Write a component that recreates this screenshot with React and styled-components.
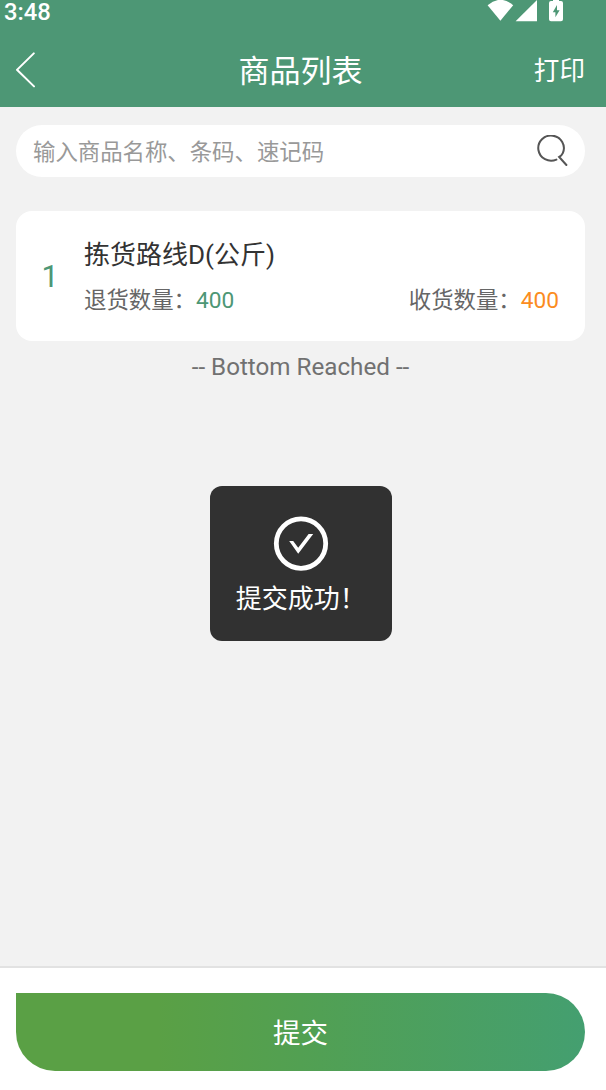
import React from 'react'
import styled, { createGlobalStyle } from 'styled-components'

const goods = [
    { id: 1, name: '拣货路线D(公斤)', returned: 400, received: 400 },
]

const App = () => {
    return (
        <Page>
            <GlobalStyle />
            <Header>
                <StatusBar>
                    <Time>3:48</Time>
                    <StatusIcons viewBox="0 0 80 24">
                        <path d="M-0.4 5.2 Q12.4 -5.6 25.2 5.2 L12.4 20.8 Z" />
                        <path d="M27.6 21.3 L49 0 V21.3 Z" />
                        <path
                            fillRule="evenodd"
                            d="M65 -1 h6 v2 h2 q2 0 2 2 V19.3 q0 2 -2 2 H63 q-2 0 -2 -2 V3 q0 -2 2 -2 h2 Z M69 5 L64.8 12.2 H67.4 V17.3 L71.6 10.2 H69 Z"
                        />
                    </StatusIcons>
                </StatusBar>
                <NavBar>
                    <BackIcon viewBox="0 0 20 36">
                        <path d="M17.8 1.4 L1 17.8 L18 34.4" />
                    </BackIcon>
                    <Title>商品列表</Title>
                    <PrintButton>打印</PrintButton>
                </NavBar>
            </Header>

            <Content>
                <SearchBox>
                    <SearchInput placeholder="输入商品名称、条码、速记码" />
                    <SearchIcon viewBox="0 0 32 32">
                        <path d="M20.4 24.6 A12.8 12.6 0 1 1 26.8 18.2 Q25.6 20.8 23.2 22 L30.4 30" />
                    </SearchIcon>
                </SearchBox>

                {goods.map((item) => (
                    <Card key={item.id}>
                        <Index>{item.id}</Index>
                        <Info>
                            <Name>{item.name}</Name>
                            <Counts>
                                <span>退货数量：<Amount $color="#4d9775">{item.returned}</Amount></span>
                                <span>收货数量：<Amount $color="#fb8c1e">{item.received}</Amount></span>
                            </Counts>
                        </Info>
                    </Card>
                ))}

                <ListEnd>-- Bottom Reached --</ListEnd>
            </Content>

            <Footer>
                <SubmitButton>提交</SubmitButton>
            </Footer>

            <Toast>
                <SuccessIcon viewBox="0 0 56 56">
                    <circle cx="28" cy="27.6" r="24.7" />
                    <path d="M16.2 25 H20.2 L25.2 31.8 L35.6 18 H40.2 L25.2 37.8 Z" />
                </SuccessIcon>
                <ToastText>提交成功！</ToastText>
            </Toast>
        </Page>
    )
}

const GlobalStyle = createGlobalStyle`
    *{
        box-sizing: border-box;
    }

    body{
        margin: 0;
        font-family: Roboto, "Noto Sans CJK SC", sans-serif;
    }

    button, input{
        font-family: inherit;
        border: none;
        padding: 0;
        background: none;
    }
`

const Page = styled.div`
    display: flex;
    flex-direction: column;
    width: 606px;
    height: 1090px;
    overflow: hidden;
    background-color: #f2f2f2;
`

const Header = styled.header`
    height: 107px;
    flex: none;
    background-color: #4d9775;
    color: #ffffff;
`

const StatusBar = styled.div`
    display: flex;
    justify-content: space-between;
    height: 32px;
    padding: 0 38px 0 4px;
`

const Time = styled.span`
    font-size: 23.8px;
    font-weight: 500;
    line-height: 24px;
`

const StatusIcons = styled.svg`
    width: 80px;
    height: 24px;
    fill: #ffffff;
    overflow: visible;
`

const NavBar = styled.nav`
    display: grid;
    grid-template-columns: 1fr auto 1fr;
    align-items: center;
    height: 75px;
    padding: 0 21px 0 16px;
`

const BackIcon = styled.svg`
    width: 20px;
    height: 36px;
    fill: none;
    stroke: #ffffff;
    stroke-width: 2;
    stroke-linecap: round;
`

const Title = styled.h1`
    margin: 0;
    padding-top: 5px;
    font-size: 31px;
    font-weight: 400;
    line-height: 44px;
`

const PrintButton = styled.button`
    justify-self: end;
    padding-top: 3px;
    color: #ffffff;
    font-size: 25.6px;
    line-height: 40px;
`

const Content = styled.main`
    flex: 1;
    padding: 18px 21px 0 16px;
`

const SearchBox = styled.div`
    display: flex;
    align-items: center;
    height: 52px;
    padding: 0 17px;
    border-radius: 26px;
    background-color: #ffffff;
`

const SearchInput = styled.input`
    flex: 1;
    height: 40px;
    padding-top: 1px;
    outline: none;
    font-size: 22.4px;

    &::placeholder{
        color: #999999;
        opacity: 1;
    }
`

const SearchIcon = styled.svg`
    width: 32px;
    height: 32px;
    fill: none;
    stroke: #555555;
    stroke-width: 2;
    stroke-linecap: round;
`

const Card = styled.section`
    display: flex;
    align-items: center;
    height: 130px;
    margin-top: 34px;
    padding-right: 26px;
    border-radius: 16px;
    background-color: #ffffff;
`

const Index = styled.div`
    width: 68px;
    padding-top: 1px;
    text-align: center;
    color: #4d9775;
    font-size: 30.5px;
`

const Info = styled.div`
    flex: 1;
    padding-top: 3px;
`

const Name = styled.div`
    color: #333333;
    font-size: 26px;
    line-height: 46px;
`

const Counts = styled.div`
    display: flex;
    justify-content: space-between;
    color: #666666;
    font-size: 22.4px;
    line-height: 44px;
`

const Amount = styled.span`
    color: ${(props) => props.$color};
    font-size: 22.7px;
`

const ListEnd = styled.div`
    padding-top: 8px;
    text-align: center;
    color: #717171;
    font-size: 24.2px;
    line-height: 36px;
`

const Footer = styled.footer`
    flex: none;
    height: 124px;
    padding: 25px 21px 0 16px;
    border-top: 2px solid #e2e2e2;
    background-color: #ffffff;
`

const SubmitButton = styled.button`
    width: 100%;
    height: 78px;
    padding-bottom: 2px;
    border-radius: 0 39px 39px 39px;
    background: linear-gradient(90deg, #5aa045 0%, #5aa045 25%, #52a052 50%, #449f70 100%);
    color: #ffffff;
    font-size: 27.5px;
`

/* floats above the list */
const Toast = styled.div`
    position: fixed;
    top: 486px;
    left: 210px;
    display: flex;
    flex-direction: column;
    align-items: center;
    width: 181.5px;
    height: 154.5px;
    padding-top: 30px;
    border-radius: 12px;
    background-color: #313131;
    color: #ffffff;
`

const SuccessIcon = styled.svg`
    width: 56px;
    height: 56px;

    circle{
        fill: none;
        stroke: #ffffff;
        stroke-width: 4.8;
    }

    path{
        fill: #ffffff;
    }
`

const ToastText = styled.div`
    font-size: 26px;
    line-height: 54px;
`

export default App
